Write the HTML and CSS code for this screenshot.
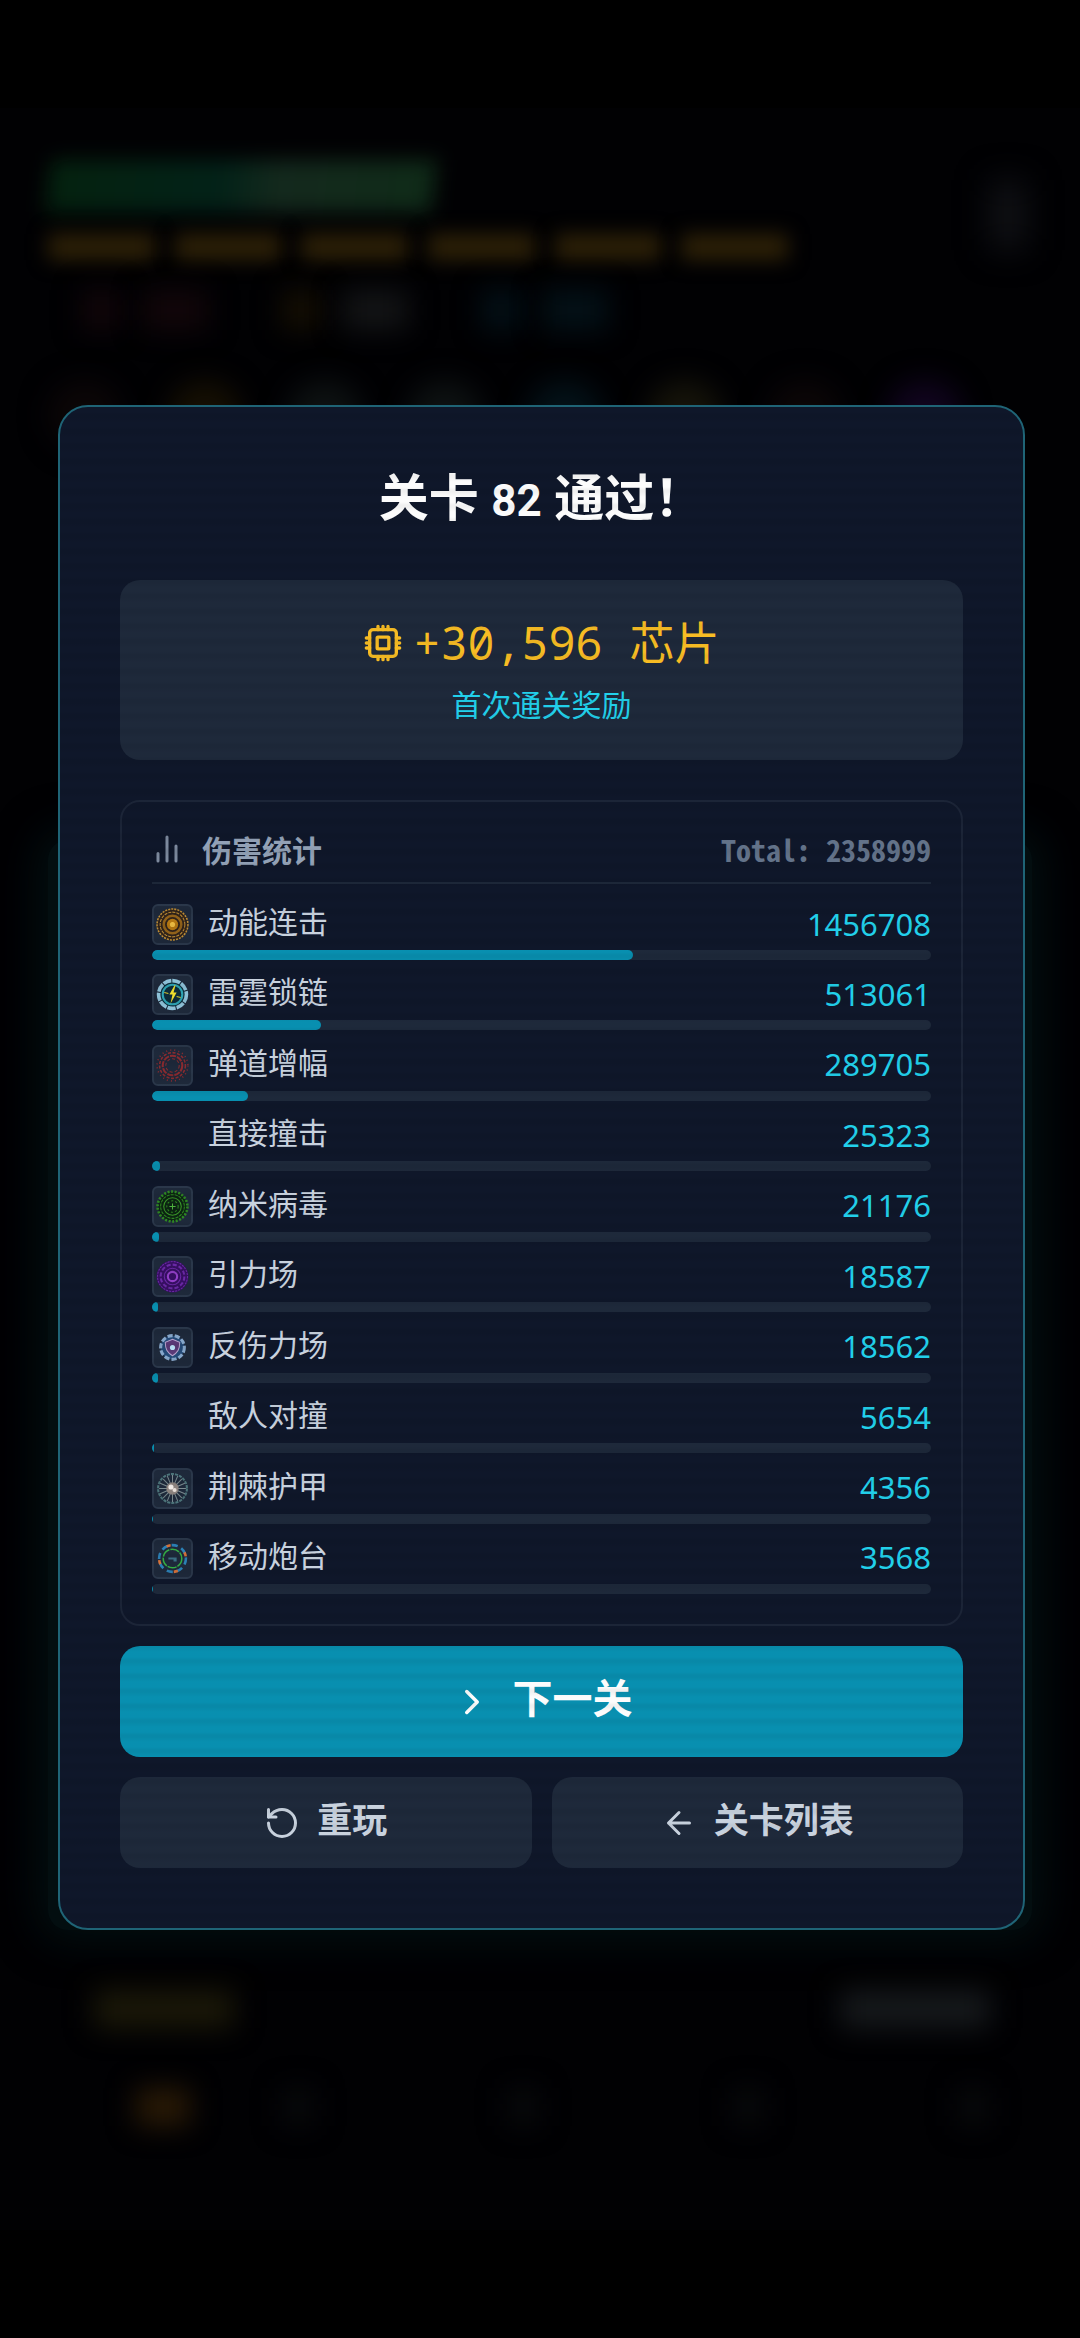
FILE: index.html
```html
<!DOCTYPE html>
<html lang="zh-CN">
<head>
<meta charset="utf-8">
<meta name="viewport" content="width=device-width, initial-scale=1">
<title>关卡 82 通过！</title>
<link rel="stylesheet" href="styles.css">
</head>
<body>
<div class="game" aria-hidden="true">
  <div class="hud">
    <div class="hud-bars">
      <div class="health"></div>
      <div class="shields"><i></i><i></i><i></i><i></i><i></i><i></i></div>
    </div>
    <div class="pause"></div>
  </div>
  <div class="counters"><i class="red"></i><i class="red wide"></i><i class="gold gap"></i><i class="grey wide"></i><i class="blue gap"></i><i class="blue wide"></i></div>
  <div class="orbs"><i class="red"></i><i class="gold"></i><i class="grey"></i><i class="grey"></i><i class="blue"></i><i class="sand"></i><i class="red"></i><i class="purple"></i></div>
  <div class="arena"></div>
  <div class="wave"><i class="sand"></i><i class="grey"></i></div>
  <div class="track"><i class="orange"></i><i></i><i></i><i></i><i></i></div>
</div>

<main class="overlay">
  <section class="modal" role="dialog" aria-labelledby="result-title">
    <h1 class="title" id="result-title">关卡 <span class="level">82</span> 通过！</h1>

    <div class="reward">
      <p class="amount">
        <svg class="icon-chip" viewBox="0 0 24 24" aria-hidden="true"><rect x="4" y="4" width="16" height="16" rx="2"/><rect x="8.5" y="8.5" width="7" height="7" rx="0.5"/><path d="M9 2v2M12 2v2M15 2v2M9 20v2M12 20v2M15 20v2M20 9h2M20 12h2M20 15h2M2 9h2M2 12h2M2 15h2"/></svg>
        <span>+30,596 芯片</span>
      </p>
      <p class="bonus">首次通关奖励</p>
    </div>

    <div class="stats">
      <div class="stats-head">
        <svg class="icon-bars" viewBox="2 2 20 20" aria-hidden="true"><path d="M18 20V10M12 20V4M6 20v-5"/></svg>
        <h2 class="stats-title">伤害统计</h2>
        <span class="total">Total: 2358999</span>
      </div>
      <ul class="rows">
        <li class="row">
          <div class="line"><span class="tile"><svg viewBox="0 0 32 32"><circle cx="16" cy="16" r="15" fill="#30231a"/><g fill="none" stroke="#c08e36"><circle cx="16" cy="16" r="15" stroke-width="1.5" stroke-dasharray="2 1"/><circle cx="16" cy="16" r="12" stroke-dasharray="3 1"/><circle cx="16" cy="16" r="8.5" stroke-width="2.5" stroke="#93631a"/></g><circle cx="16" cy="16" r="5.5" fill="#b77912"/><circle cx="16" cy="16" r="2.5" fill="#f2c044"/></svg></span><span class="name">动能连击</span><span class="value">1456708</span></div>
          <div class="bar"><div class="fill" style="width:61.75%"></div></div>
        </li>
        <li class="row">
          <div class="line"><span class="tile"><svg viewBox="0 0 32 32"><circle cx="16" cy="16" r="13" fill="#0d2c3a"/><circle cx="16" cy="16" r="13.5" fill="none" stroke="#8fc3da" stroke-width="3.5" stroke-dasharray="8 1"/><circle cx="16" cy="16" r="9.5" fill="none" stroke="#2fa6b6" stroke-width="2"/><path d="M18 7l-5 9h3l-2 9 6-11h-3l2-7z" fill="#f1e02e"/><path d="M8 14l4 1M20 18l4 1" stroke="#d4c82e"/></svg></span><span class="name">雷霆锁链</span><span class="value">513061</span></div>
          <div class="bar"><div class="fill" style="width:21.75%"></div></div>
        </li>
        <li class="row">
          <div class="line"><span class="tile"><svg viewBox="0 0 32 32"><g fill="none" stroke="#8c2b30"><circle cx="16" cy="16" r="15" stroke-width="1.5" stroke-dasharray="1 3"/><circle cx="16" cy="16" r="12.5" stroke-width="1.5" stroke-dasharray="3 1.5"/><circle cx="16" cy="16" r="9.5" stroke-width="2" stroke-dasharray="6 1"/><circle cx="16" cy="16" r="6.5" stroke-dasharray="3 2"/></g></svg></span><span class="name">弹道增幅</span><span class="value">289705</span></div>
          <div class="bar"><div class="fill" style="width:12.28%"></div></div>
        </li>
        <li class="row">
          <div class="line"><span class="tile blank"></span><span class="name">直接撞击</span><span class="value">25323</span></div>
          <div class="bar"><div class="fill" style="width:1.07%"></div></div>
        </li>
        <li class="row">
          <div class="line"><span class="tile"><svg viewBox="0 0 32 32"><circle cx="16" cy="16" r="14" fill="#0b2412"/><g fill="none" stroke="#2f8a22"><circle cx="16" cy="16" r="14.5" stroke-width="2.5" stroke-dasharray="2 1.5"/><circle cx="16" cy="16" r="11.5" stroke-dasharray="3 1"/><circle cx="16" cy="16" r="8.5" stroke="#3c9a2a"/><circle cx="16" cy="16" r="5.5" stroke-dasharray="2 2"/></g><path d="M16 13v6M13 16h6" stroke="#4eb33e"/></svg></span><span class="name">纳米病毒</span><span class="value">21176</span></div>
          <div class="bar"><div class="fill" style="width:0.9%"></div></div>
        </li>
        <li class="row">
          <div class="line"><span class="tile"><svg viewBox="0 0 32 32"><circle cx="16" cy="16" r="15.5" fill="#370f63"/><g fill="none" stroke="#6c2aa8"><circle cx="16" cy="16" r="14.5" stroke-dasharray="2 1"/><circle cx="16" cy="16" r="11.5" stroke-width="2" stroke-dasharray="4 2"/><circle cx="16" cy="16" r="8"/><circle cx="16" cy="16" r="4.5" stroke="#9340c9" stroke-width="2"/></g></svg></span><span class="name">引力场</span><span class="value">18587</span></div>
          <div class="bar"><div class="fill" style="width:0.79%"></div></div>
        </li>
        <li class="row">
          <div class="line"><span class="tile"><svg viewBox="0 0 32 32"><circle cx="16" cy="16" r="11.5" fill="#244a78" stroke="#88a9cd" stroke-width="3" stroke-dasharray="5 2"/><path d="M16 8l7 3c0 7-2 10-7 13-5-3-7-6-7-13z" fill="#5b3a78" stroke="#b7a5cf"/><circle cx="16" cy="16" r="2.5" fill="#bfe9ff"/></svg></span><span class="name">反伤力场</span><span class="value">18562</span></div>
          <div class="bar"><div class="fill" style="width:0.79%"></div></div>
        </li>
        <li class="row">
          <div class="line"><span class="tile blank"></span><span class="name">敌人对撞</span><span class="value">5654</span></div>
          <div class="bar"><div class="fill" style="width:0.24%"></div></div>
        </li>
        <li class="row">
          <div class="line"><span class="tile"><svg viewBox="0 0 32 32"><circle cx="16" cy="16" r="14" fill="none" stroke="#4d757b" stroke-width="2" stroke-dasharray="3 1"/><path d="M16 3v26M3 16h26M7 7l18 18M25 7L7 25M11 4l10 24M21 4L11 28M4 11l24 10M4 21l24-10" stroke="#7c8c91"/><circle cx="16" cy="16" r="6" fill="#8d8480"/><circle cx="14.5" cy="14.5" r="2.5" fill="#f2ece8"/><circle cx="18" cy="17.5" r="2" fill="#e8e0da"/></svg></span><span class="name">荆棘护甲</span><span class="value">4356</span></div>
          <div class="bar"><div class="fill" style="width:0.18%"></div></div>
        </li>
        <li class="row">
          <div class="line"><span class="tile"><svg viewBox="0 0 32 32"><g fill="none"><circle cx="16" cy="16" r="13" stroke="#2c82b8" stroke-width="2.5" stroke-dasharray="6 4"/><circle cx="16" cy="16" r="13" stroke="#d9733a" stroke-width="2.5" stroke-dasharray="4 16" stroke-dashoffset="5"/><circle cx="16" cy="16" r="9" stroke="#35b045" stroke-width="1.5" stroke-dasharray="9 1"/></g><path d="M12 15h8v2h-8zM17 17h3v2h-3z" fill="#3d7186"/></svg></span><span class="name">移动炮台</span><span class="value">3568</span></div>
          <div class="bar"><div class="fill" style="width:0.15%"></div></div>
        </li>
      </ul>
    </div>

    <div class="actions">
      <button class="btn btn-next" type="button"><svg viewBox="0 0 24 24" aria-hidden="true"><path d="M9 18l6-6-6-6"/></svg><span>下一关</span></button>
      <button class="btn" type="button"><svg viewBox="0 0 24 24" aria-hidden="true"><path d="M3 12a9 9 0 1 0 9-9 9.75 9.75 0 0 0-6.74 2.74L3 8"/><path d="M3 3v5h5"/></svg><span>重玩</span></button>
      <button class="btn" type="button"><svg viewBox="0 0 24 24" aria-hidden="true"><path d="M12 19l-7-7 7-7M19 12H5"/></svg><span>关卡列表</span></button>
    </div>
  </section>
</main>
</body>
</html>
```
FILE: styles.css
```css
* { box-sizing: border-box; }

body {
  margin: 0;
  min-height: 100vh;
  position: relative;
  overflow-x: hidden;
  background: #000;
  color: #fff;
  font-family: "Noto Sans CJK SC", sans-serif;
}

h1, h2, p, ul { margin: 0; padding: 0; }
ul { list-style: none; }

/* Blurred, dimmed game screen behind the dialog */
.game {
  position: absolute;
  inset: 108px 0;
  padding: 52px 48px 46px;
  display: flex;
  flex-direction: column;
  overflow: hidden;
  background: #010103;
}
.game i { display: block; filter: blur(14px); }
.hud { display: flex; justify-content: space-between; }
.hud-bars { width: 740px; }
.health {
  width: 386px;
  height: 52px;
  background: linear-gradient(90deg, #04220f, #032218 45%, #14291d 60%, #0f2b18);
  transform: skewX(-6deg);
  filter: blur(10px);
}
.shields { display: flex; gap: 20px; margin-top: 22px; }
.shields i { width: 108px; height: 26px; background: #2e2107; filter: blur(10px); }
.pause { width: 36px; height: 70px; margin: 20px 6px 0 0; background: #101115; filter: blur(16px); }
.counters { display: flex; gap: 22px; margin: 30px 34px 0; }
.counters i { width: 38px; height: 40px; }
.counters .wide { width: 66px; }
.counters .gap { margin-left: 52px; }
.orbs { display: flex; gap: 46px; margin-top: 50px; }
.orbs i { width: 74px; height: 70px; border-radius: 50%; }
.red { background: #12060a; }
.gold { background: #150f03; }
.grey { background: #131416; }
.blue { background: #031118; }
.sand { background: #1b1808; }
.purple { background: #10041e; }
.orbs .red { background: #0b0607; }
.orbs .grey { background: #0d1112; }
.orbs .sand { background: #15130a; }
.arena {
  flex: 1;
  margin: 390px 0 0;
  border-radius: 20px;
  background: #030e10;
  box-shadow: 0 0 40px 12px #030e10;
}
.wave { display: flex; justify-content: space-between; padding: 60px 42px 0 46px; }
.wave i { width: 140px; height: 38px; }
.wave .grey { width: 150px; background: #16191c; }
.track { display: flex; padding: 60px 0 58px 88px; }
.track i { width: 32px; height: 38px; background: #08090b; }
.track i + i { margin-left: 193px; }
.track .orange { width: 54px; background: #2a1a06; }
.track .orange + i { margin-left: 92px; }

.overlay {
  position: relative;
  min-height: 100vh;
  display: flex;
  flex-direction: column;
  justify-content: center;
  padding: 20px 55px 23px 58px;
}

/* Dialog with faint scan lines laid over its whole face */
.modal {
  position: relative;
  border: 2px solid #1f6476;
  border-radius: 30px;
  padding: 60px;
  background: #0f172a;
  overflow: hidden;
}
.modal::after {
  content: "";
  position: absolute;
  inset: 0;
  pointer-events: none;
  background: repeating-linear-gradient(rgba(0, 0, 0, 0.01) 0 5px, rgba(0, 0, 0, 0.06) 8px 10px, rgba(0, 0, 0, 0.01) 15px);
}

.title {
  margin-bottom: 47px;
  text-align: center;
  font: 700 50px/64px Roboto, "Noto Sans CJK SC", sans-serif;
}
.level { font-size: 44px; }

.reward {
  margin-bottom: 40px;
  padding: 30px;
  border-radius: 20px;
  background: #1e293b;
  text-align: center;
}
.amount {
  display: flex;
  justify-content: center;
  align-items: center;
  gap: 10px;
  color: #fbbf24;
  font: 400 45px/66px "Noto Sans Mono", "DejaVu Sans Mono", "Noto Sans CJK SC", monospace;
}
.bonus { color: #22d3ee; font-size: 30px; line-height: 54px; }

svg { display: block; flex: none; }
.icon-chip { width: 40px; height: 40px; fill: none; stroke: currentColor; stroke-width: 2; stroke-linecap: round; stroke-linejoin: round; }

.stats {
  margin-bottom: 20px;
  padding: 30px;
  border: 2px solid #1c2538;
  border-radius: 20px;
}
.stats-head {
  display: flex;
  align-items: center;
  gap: 20px;
  margin-bottom: 20px;
  padding-bottom: 16px;
  border-bottom: 2px solid #1e293b;
  line-height: 34px;
}
.icon-bars { width: 30px; height: 30px; fill: none; stroke: #7e8b9f; stroke-width: 2; stroke-linecap: round; }
.stats-title { flex: 1; color: #94a3b8; font-size: 30px; font-weight: 700; }
.total { color: #64748b; font: 700 30px/34px "Noto Sans Mono CJK SC", "DejaVu Sans Mono", monospace; }

.rows { min-height: 690px; display: flex; flex-direction: column; justify-content: space-between; }
.line { display: flex; align-items: center; gap: 15px; margin-bottom: 5px; }
.tile {
  width: 41px;
  height: 41px;
  padding: 2px;
  border: 2px solid #2b384b;
  border-radius: 6px;
  background: #1e293b;
}
.blank { visibility: hidden; }
.name { flex: 1; padding-bottom: 8px; color: #cbd5e1; font-size: 30px; line-height: 33px; }
.value { padding-bottom: 2px; color: #22d3ee; font: 400 31px/38px "Noto Sans", sans-serif; }
.bar { height: 10px; border-radius: 5px; overflow: hidden; background: #1e293b; }
.fill { height: 100%; border-radius: 5px; background: #0891b2; }

.actions { display: grid; grid-template-columns: 1fr 1fr; gap: 20px; }
.btn {
  display: flex;
  justify-content: center;
  align-items: center;
  gap: 17px;
  padding: 20px;
  border: 0;
  border-radius: 20px;
  background: #1e293b;
  color: #cbd5e1;
  font: 700 35px/41px "Noto Sans CJK SC", sans-serif;
}
.btn span { padding-bottom: 10px; }
.btn svg { width: 36px; height: 36px; fill: none; stroke: currentColor; stroke-width: 2; stroke-linecap: round; stroke-linejoin: round; }
.btn-next { grid-column: 1 / -1; gap: 20px; padding: 25px; background: #0891b2; color: #fff; font-size: 40px; line-height: 51px; }
.btn-next svg { width: 42px; height: 42px; }
```
